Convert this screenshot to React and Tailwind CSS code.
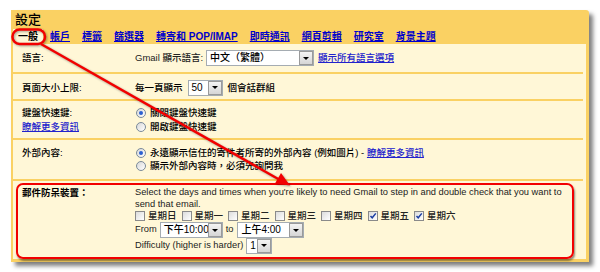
import React from "react";

function Select({ w, text }) {
  return (
    <div
      className="flex items-center h-[16px] border border-[#a5acb2] bg-white"
      style={{ width: w }}
    >
      <div className="flex-1 pl-[3px] text-[10px] leading-[14px] text-black whitespace-nowrap overflow-hidden">{text}</div>
      <div className="w-[14px] h-[14px] border border-[#9a9a9a] bg-gradient-to-b from-[#f4f4f4] to-[#d6d6d6] flex items-center justify-center">
        <div className="w-0 h-0 border-l-[3px] border-r-[3px] border-t-[3px] border-l-transparent border-r-transparent border-t-black" />
      </div>
    </div>
  );
}

function Radio({ on }) {
  return (
    <div className="w-[10px] h-[10px] rounded-full border border-[#7a8a99] bg-gradient-to-br from-[#d8d8d8] to-white flex items-center justify-center shrink-0">
      {on && <div className="w-[4px] h-[4px] rounded-full bg-[#2b5fd0]" />}
    </div>
  );
}

function Check({ on }) {
  return (
    <div className="relative w-[10px] h-[10px] border border-[#8a8a8a] bg-gradient-to-br from-[#dcdcdc] to-white shrink-0">
      {on && (
        <svg className="absolute left-0 top-0" width="8" height="8" viewBox="0 0 8 8">
          <path d="M1.5 4 L3.2 5.8 L6.8 1.4" stroke="#1d3fa3" strokeWidth="1.5" fill="none" />
        </svg>
      )}
    </div>
  );
}

const tabs = ["帳戶", "標籤", "篩選器", "轉寄和 POP/IMAP", "即時通訊", "網頁剪輯", "研究室", "背景主題"];
const days = ["星期日", "星期一", "星期二", "星期三", "星期四", "星期五", "星期六"];

export default function App() {
  return (
    <div className="relative w-[600px] h-[272px] bg-white overflow-hidden font-['Liberation_Sans','Noto_Sans_CJK_TC',sans-serif] font-medium text-[9.5px] leading-[12px] text-black">
      <div className="ml-[11px] mt-[10px] w-[578px] h-[252px] bg-[#fad163] rounded-tr-[3px] shadow-[4px_4px_4px_rgba(0,0,0,0.5)] flex flex-col">
        <div className="pl-[4px] pt-[3px] h-[19px] text-[13px] leading-[14px] text-black">設定</div>
        <div className="flex items-end h-[15px] pl-[2px] gap-[2px] text-[10px] font-bold leading-[12px]">
          <div className="h-[15px] px-[5px] bg-[#fff7d7] text-black flex items-center">一般</div>
          {tabs.map((t) => (
            <div key={t} className="h-[15px] px-[5px] flex items-center text-[#0000cc] underline whitespace-nowrap">
              {t}
            </div>
          ))}
        </div>
        <div className="ml-[2px] mr-[3px] mb-[3px] flex-1 bg-[#fff7d7] flex flex-col">
          {/* row 1 */}
          <div className="mr-[3px] h-[30px] border-b-2 border-[#fad163] flex items-center">
            <div className="w-[122px] pl-[9px]">語言:</div>
            <div className="flex items-center">
              <span className="text-[#222]">Gmail 顯示語言:</span>
              <div className="ml-[3px]"><Select w={108} text="中文（繁體）" /></div>
              <span className="ml-[4px] text-[#2222cc] underline">顯示所有語言選項</span>
            </div>
          </div>
          {/* row 2 */}
          <div className="mr-[3px] h-[27px] pt-[2px] border-b-2 border-[#fad163] flex items-center">
            <div className="w-[122px] pl-[9px]">頁面大小上限:</div>
            <div className="flex items-center">
              <span>每一頁顯示</span>
              <div className="ml-[5px] mr-[5px]"><Select w={35} text="50" /></div>
              <span>個會話群組</span>
            </div>
          </div>
          {/* row 3 */}
          <div className="mr-[3px] h-[39px] pt-[5px] border-b-2 border-[#fad163] flex items-start leading-[14px]">
            <div className="w-[122px] pl-[9px] flex flex-col">
              <span>鍵盤快速鍵:</span>
              <span className="text-[#2222cc] underline">瞭解更多資訊</span>
            </div>
            <div className="flex flex-col">
              <div className="flex items-center gap-[4px] pl-[1px] h-[14px]"><Radio on /><span>關閉鍵盤快速鍵</span></div>
              <div className="flex items-center gap-[4px] pl-[1px] h-[14px]"><Radio /><span>開啟鍵盤快速鍵</span></div>
            </div>
          </div>
          {/* row 4 */}
          <div className="mr-[3px] h-[41px] pt-[6px] border-b-2 border-[#fad163] flex items-start leading-[13px]">
            <div className="w-[122px] pl-[9px]">外部內容:</div>
            <div className="flex flex-col">
              <div className="flex items-center gap-[4px] pl-[1px] h-[13px]">
                <Radio on />
                <span>
                  永遠顯示信任的寄件者所寄的外部內容 (例如圖片) - <span className="text-[#2222cc] underline">瞭解更多資訊</span>
                </span>
              </div>
              <div className="flex items-center gap-[4px] pl-[1px] h-[13px]"><Radio /><span>顯示外部內容時，必須先詢問我</span></div>
            </div>
          </div>
          {/* row 5 */}
          <div className="mt-[2px] ml-[3px] mr-[12px] h-[76px] border-2 border-[#f20000] rounded-[7px] shadow-[1px_2px_2px_rgba(0,0,0,0.45)] flex items-start pt-[2px] leading-[11.5px]">
            <div className="w-[117px] pl-[4px] font-bold">郵件防呆裝置：</div>
            <div className="flex flex-col text-[#222]">
              <div className="whitespace-nowrap text-[9.3px] font-normal">
                Select the days and times when you're likely to need Gmail to step in and double check that you want to
                <br />
                send that email.
              </div>
              <div className="flex items-center h-[12px] gap-[5px]">
                {days.map((d, i) => (
                  <div key={d} className="flex items-center gap-[3px]">
                    <Check on={i >= 5} />
                    <span>{d}</span>
                  </div>
                ))}
              </div>
              <div className="flex items-center h-[14px] mt-[1px]">
                <span className="text-[9.3px] font-normal">From</span>
                <div className="ml-[3px]"><Select w={63} text="下午10:00" /></div>
                <span className="ml-[3px] text-[9.3px] font-normal">to</span>
                <div className="ml-[4px]"><Select w={67} text="上午4:00" /></div>
              </div>
              <div className="flex items-center h-[15px] mt-[1px]">
                <span className="text-[9.3px] font-normal">Difficulty (higher is harder)</span>
                <div className="ml-[3px]"><Select w={26} text="1" /></div>
              </div>
            </div>
          </div>
        </div>
      </div>
      <svg
        className="absolute left-0 top-0 pointer-events-none [filter:drop-shadow(1px_1px_1px_rgba(0,0,0,0.35))]"
        width="600"
        height="272"
        viewBox="0 0 600 272"
      >
        <rect x="12.5" y="29.5" width="32.5" height="14.5" rx="7" fill="none" stroke="#f20000" strokeWidth="2.5" />
        <line x1="41" y1="44" x2="280" y2="180" stroke="#f20000" strokeWidth="2.5" />
        <polygon points="290,185.5 275,183.5 281,173" fill="#f20000" />
      </svg>
    </div>
  );
}
